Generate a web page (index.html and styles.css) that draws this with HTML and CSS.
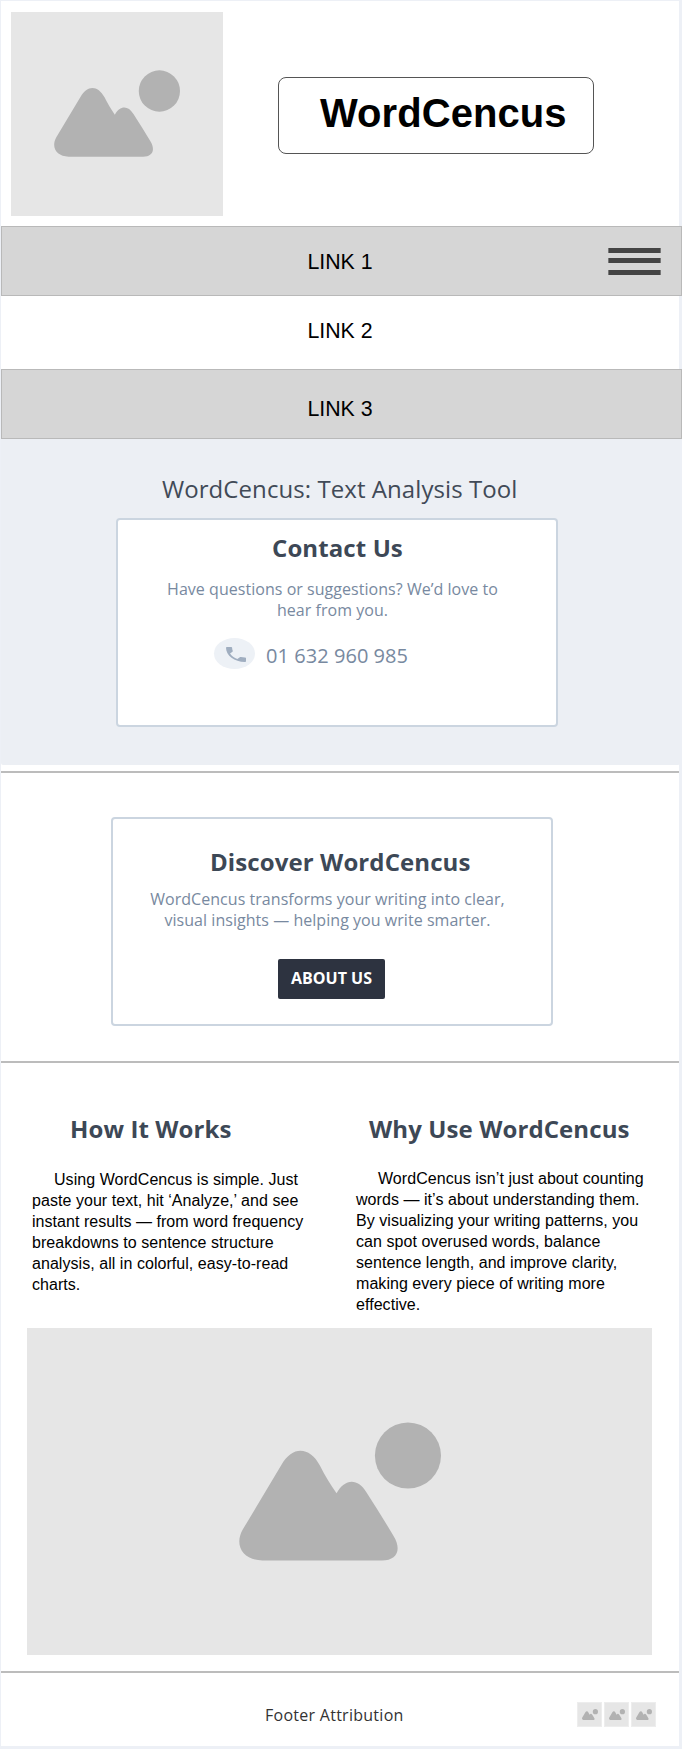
FILE: index.html
```html
<!DOCTYPE html>
<html lang="en">
<head>
<meta charset="utf-8">
<title>WordCencus</title>
<link rel="stylesheet" href="styles.css">
</head>
<body>
<svg class="defs" aria-hidden="true">
  <symbol id="picture" viewBox="0 0 379 261" preserveAspectRatio="none">
    <path d="M44 260C8 260-10 232 7 202L80 80C100 45 132 45 152 82C161 100 172 118 183 134C198 107 222 104 239 132C257 160 274 187 290 214C306 240 296 260 268 260Z"/>
    <circle cx="317" cy="63" r="62"/>
  </symbol>
</svg>
<div class="page">
  <header class="header">
    <div class="ph ph-logo"><svg><use href="#picture"/></svg></div>
    <h1 class="brand"><span>WordCencus</span></h1>
  </header>
  <nav class="nav">
    <a class="link link-bar">LINK 1<span class="burger"><i></i><i></i><i></i></span></a>
    <a class="link link-plain">LINK 2</a>
    <a class="link link-bar link-third">LINK 3</a>
  </nav>
  <section class="contact">
    <h2 class="tagline"><span>WordCencus: Text Analysis Tool</span></h2>
    <div class="card card-contact">
      <h3 class="title">Contact Us</h3>
      <p class="copy">Have questions or suggestions? We’d love to<br>hear from you.</p>
      <div class="phone">
        <span class="phone-badge"><svg viewBox="3 3 18 18" preserveAspectRatio="none"><path d="M6.62 10.79c1.44 2.83 3.76 5.14 6.59 6.59l2.2-2.2c.27-.27.67-.36 1.02-.24 1.12.37 2.33.57 3.57.57.55 0 1 .45 1 1V20c0 .55-.45 1-1 1-9.39 0-17-7.61-17-17 0-.55.45-1 1-1h3.5c.55 0 1 .45 1 1 0 1.25.2 2.45.57 3.57.11.35.03.74-.25 1.02l-2.2 2.2z"/></svg></span>
        <span class="number">01 632 960 985</span>
      </div>
    </div>
  </section>
  <section class="discover">
    <div class="card card-discover">
      <h3 class="title">Discover WordCencus</h3>
      <p class="copy">WordCencus transforms your writing into clear,<br>visual insights — helping you write smarter.</p>
      <a class="button">ABOUT US</a>
    </div>
  </section>
  <section class="info">
    <div class="columns">
      <article class="column">
        <h3 class="title how">How It Works</h3>
        <p class="body">Using WordCencus is simple. Just<br>paste your text, hit ‘Analyze,’ and see<br>instant results — from word frequency<br>breakdowns to sentence structure<br>analysis, all in colorful, easy-to-read<br>charts.</p>
      </article>
      <article class="column column-why">
        <h3 class="title why">Why Use WordCencus</h3>
        <p class="body">WordCencus isn’t just about counting<br>words — it’s about understanding them.<br>By visualizing your writing patterns, you<br>can spot overused words, balance<br>sentence length, and improve clarity,<br>making every piece of writing more<br>effective.</p>
      </article>
    </div>
    <div class="ph ph-large"><svg><use href="#picture"/></svg></div>
  </section>
  <footer class="footer">
    <span class="attribution">Footer Attribution</span>
    <div class="thumbs">
      <div class="ph ph-mini"><svg><use href="#picture"/></svg></div>
      <div class="ph ph-mini"><svg><use href="#picture"/></svg></div>
      <div class="ph ph-mini"><svg><use href="#picture"/></svg></div>
    </div>
  </footer>
</div>
</body>
</html>
```
FILE: styles.css
```css
* { box-sizing: border-box; }
body { margin: 0; background: #edf0f6; font-family: "Open Sans", "Noto Sans", sans-serif; }
h1, h2, h3, p { margin: 0; }
.defs { position: absolute; width: 0; height: 0; }
.page { width: 678px; height: 1745px; margin: 1px 0 3px 1px; background: #fff; }

/* Picture placeholders */
.ph { background: #e6e6e6; }
.ph svg { display: block; fill: #b2b2b2; }
.ph-logo { width: 212px; height: 204px; padding: 58px 0 0 43px; }
.ph-logo svg { width: 126px; height: 87px; }
.ph-large { width: 625px; height: 327px; margin-left: 26px; padding: 94px 0 0 212px; }
.ph-large svg { width: 202px; height: 139px; }
.ph-mini { width: 25px; height: 25px; padding: 6px 0 0 4px; border: 1px solid #ededed; }
.ph-mini svg { width: 16px; height: 11px; }

.header { display: flex; height: 225px; padding: 11px 0 0 10px; }
.brand { width: 316px; height: 77px; margin: 65px 0 0 55px; padding: 12px 0 0 41px; border: 1px solid #555; border-radius: 8px; background: #fff; font: bold 40px/46px "Liberation Sans", Arial, sans-serif; letter-spacing: .06px; }

.nav { width: 681px; }
.link { display: flex; justify-content: center; position: relative; padding-right: 3px; color: #000; font: 21.33px/24px "Liberation Sans", Arial, sans-serif; }
.link-bar { height: 70px; padding-top: 23px; background: #d6d6d6; border: 1px solid #b9b9b9; }
.link-plain { height: 73px; padding-top: 23px; }
.link-third { padding-top: 27px; }
.burger { position: absolute; top: 21px; right: 20px; width: 53px; }
.burger i { display: block; height: 5px; margin-bottom: 5px; background: #444; border: 1px solid #777; border-width: 0 1px; }
.burger i:last-child { margin-top: 7px; }

.contact { width: 679px; height: 326px; padding-top: 34px; background: #eceff4; border-radius: 0 0 2px 2px; }
.tagline { padding-left: 161px; color: #414a57; font-size: 24px; font-weight: 400; line-height: 32px; letter-spacing: .07px; white-space: nowrap; }
.card { width: 442px; height: 209px; border: 2px solid #cbd5e0; border-radius: 4px; background: #fff; }
.card-contact { margin: 13px 0 0 115px; padding-top: 12px; }
.card-discover { margin-left: 110px; padding-top: 27px; }
.title { color: #3d4856; font-size: 24px; font-weight: 700; line-height: 32px; letter-spacing: .1px; white-space: nowrap; }
.card-contact .title { padding-left: 154px; }
.card-discover .title { padding-left: 97px; }
.copy { color: #7889a0; font-size: 16px; line-height: 21px; letter-spacing: .04px; text-align: center; }
.card-contact .copy { margin-top: 15px; padding-right: 9px; }
.card-discover .copy { margin-top: 11px; padding-right: 9px; }
.phone { display: flex; gap: 11px; margin: 17px 0 0 96px; }
.phone-badge { display: flex; width: 41px; height: 31px; padding: 9px 0 0 12px; border-radius: 50%; background: #edf1f6; }
.phone-badge svg { width: 20px; height: 15px; fill: #a0aec0; }
.number { padding-top: 4px; color: #7889a0; font-size: 20px; line-height: 27px; letter-spacing: .05px; white-space: nowrap; }

.discover { height: 292px; margin-top: 6px; padding-top: 44px; border-top: 2px solid #bcbcbc; border-bottom: 2px solid #bcbcbc; }
.button { display: flex; justify-content: center; width: 107px; height: 40px; margin: 28px 0 0 165px; padding-top: 8px; border-radius: 2px; background: #2d3340; color: #fff; font-size: 16px; font-weight: 700; line-height: 22px; }

.info { height: 610px; padding-top: 50px; border-bottom: 2px solid #bcbcbc; }
.columns { display: flex; height: 215px; }
.column { width: 324px; padding-left: 31px; }
.column-why { width: 354px; }
.how { padding-left: 38px; }
.why { padding-left: 13px; }
.body { margin-top: 24px; color: #000; font: 16px/21px "Liberation Sans", Arial, sans-serif; letter-spacing: .05px; text-indent: 22px; white-space: nowrap; }
.column-why .body { margin-top: 23px; }

.footer { display: flex; justify-content: space-between; padding: 29px 23px 0 264px; }
.attribution { padding-top: 2px; color: #333; font-size: 16px; line-height: 22px; letter-spacing: .27px; }
.thumbs { display: flex; gap: 2px; }
```
